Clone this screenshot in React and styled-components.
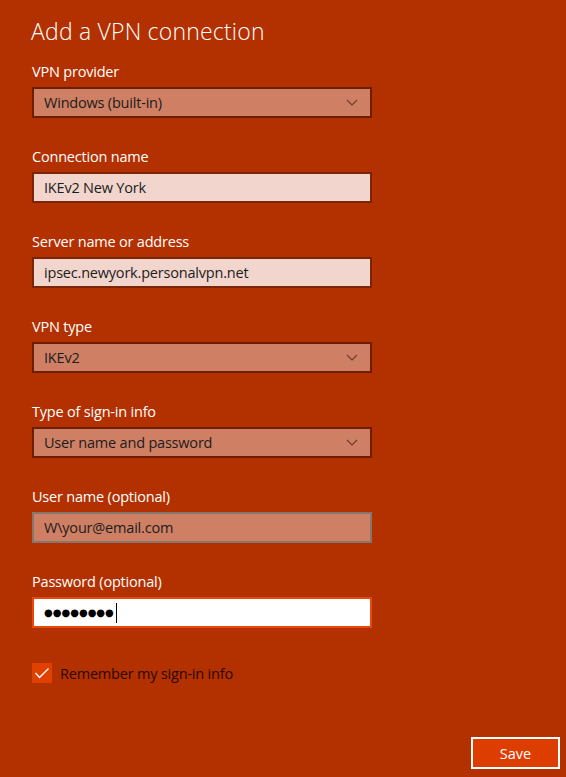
import styled, { createGlobalStyle } from 'styled-components';

const GlobalStyle = createGlobalStyle`
  html, body {
    margin: 0;
    padding: 0;
    background: #b33000;
  }
  body {
    font-family: 'Open Sans', 'Noto Sans', sans-serif;
  }
`;

const Page = styled.div`
  width: 566px;
  height: 777px;
  box-sizing: border-box;
  padding: 16px 6px 0 32px;
  background: #b33000;
  display: flex;
  flex-direction: column;
`;

const Title = styled.h1`
  margin: 0 0 16px -1px;
  font-size: 23px;
  line-height: 30px;
  font-weight: 300;
  letter-spacing: 0.2px;
  color: #ffffff;
`;

const Form = styled.div`
  display: flex;
  flex-direction: column;
  gap: 29px;
`;

const Field = styled.div`
  display: flex;
  flex-direction: column;
  gap: 5px;
`;

const Label = styled.label`
  font-size: 14.5px;
  letter-spacing: -0.2px;
  line-height: 20px;
  color: #ffffff;
`;

const Box = styled.div`
  box-sizing: border-box;
  width: 340px;
  height: 31px;
  padding: 0 12px 0 10px;
  display: flex;
  align-items: center;
  justify-content: space-between;
  font-size: 14.5px;
  letter-spacing: -0.2px;
  color: #1c1c1c;
  border: 2px solid ${({ $border }) => $border || '#6e1d00'};
  background: ${({ $fill }) => $fill || '#cf8064'};
`;

const Chevron = () => (
  <svg width="12" height="7" viewBox="0 0 12 7">
    <polyline points="1,1 6,6 11,1" fill="none" stroke="#6f3a2a" strokeWidth="1.1" />
  </svg>
);

const Dots = styled.span`
  font-family: 'DejaVu Sans', sans-serif;
  font-size: 10px;
  letter-spacing: 0;
  color: #000;
`;

const Caret = styled.span`
  display: inline-block;
  width: 1px;
  height: 20px;
  background: #000;
  margin-left: 2px;
`;

const PasswordValue = styled.div`
  display: flex;
  align-items: center;
`;

const CheckRow = styled.div`
  display: flex;
  align-items: center;
  gap: 8px;
  margin-top: 35px;
  font-size: 14.5px;
  letter-spacing: -0.2px;
  color: #2a0900;
`;

const CheckBox = styled.span`
  width: 20px;
  height: 20px;
  background: #e14100;
  display: flex;
  align-items: center;
  justify-content: center;
`;

const Footer = styled.div`
  display: flex;
  justify-content: flex-end;
  margin-top: 54px;
`;

const SaveButton = styled.button`
  box-sizing: border-box;
  width: 89px;
  height: 32px;
  border: 2px solid #ffffff;
  background: #de3d00;
  color: #ffffff;
  font-family: 'Open Sans', 'Noto Sans', sans-serif;
  font-size: 14.5px;
  padding: 0;
`;

function SelectField({ label, value }) {
  return (
    <Field>
      <Label>{label}</Label>
      <Box>
        <span>{value}</span>
        <Chevron />
      </Box>
    </Field>
  );
}

function TextField({ label, value, fill, border }) {
  return (
    <Field>
      <Label>{label}</Label>
      <Box $fill={fill} $border={border}>
        <span>{value}</span>
      </Box>
    </Field>
  );
}

export default function App() {
  return (
    <>
      <GlobalStyle />
      <Page>
        <Title>Add a VPN connection</Title>
        <Form>
          <SelectField label="VPN provider" value="Windows (built-in)" />
          <TextField label="Connection name" value="IKEv2 New York" fill="#f2d5cc" border="#7a2408" />
          <TextField label="Server name or address" value="ipsec.newyork.personalvpn.net" fill="#f2d5cc" border="#7a2408" />
          <SelectField label="VPN type" value="IKEv2" />
          <SelectField label="Type of sign-in info" value="User name and password" />
          <TextField label="User name (optional)" value="W\your@email.com" fill="#cf8064" border="#84776f" />
          <Field>
            <Label>Password (optional)</Label>
            <Box $fill="#ffffff" $border="#e8470e">
              <PasswordValue>
                <Dots>●●●●●●●●</Dots>
                <Caret />
              </PasswordValue>
            </Box>
          </Field>
        </Form>
        <CheckRow>
          <CheckBox>
            <svg width="16" height="12" viewBox="0 0 16 12">
              <polyline points="1.5,6 5.5,10.5 14.5,1.5" fill="none" stroke="#ffffff" strokeWidth="1.4" />
            </svg>
          </CheckBox>
          Remember my sign-in info
        </CheckRow>
        <Footer>
          <SaveButton>Save</SaveButton>
        </Footer>
      </Page>
    </>
  );
}
